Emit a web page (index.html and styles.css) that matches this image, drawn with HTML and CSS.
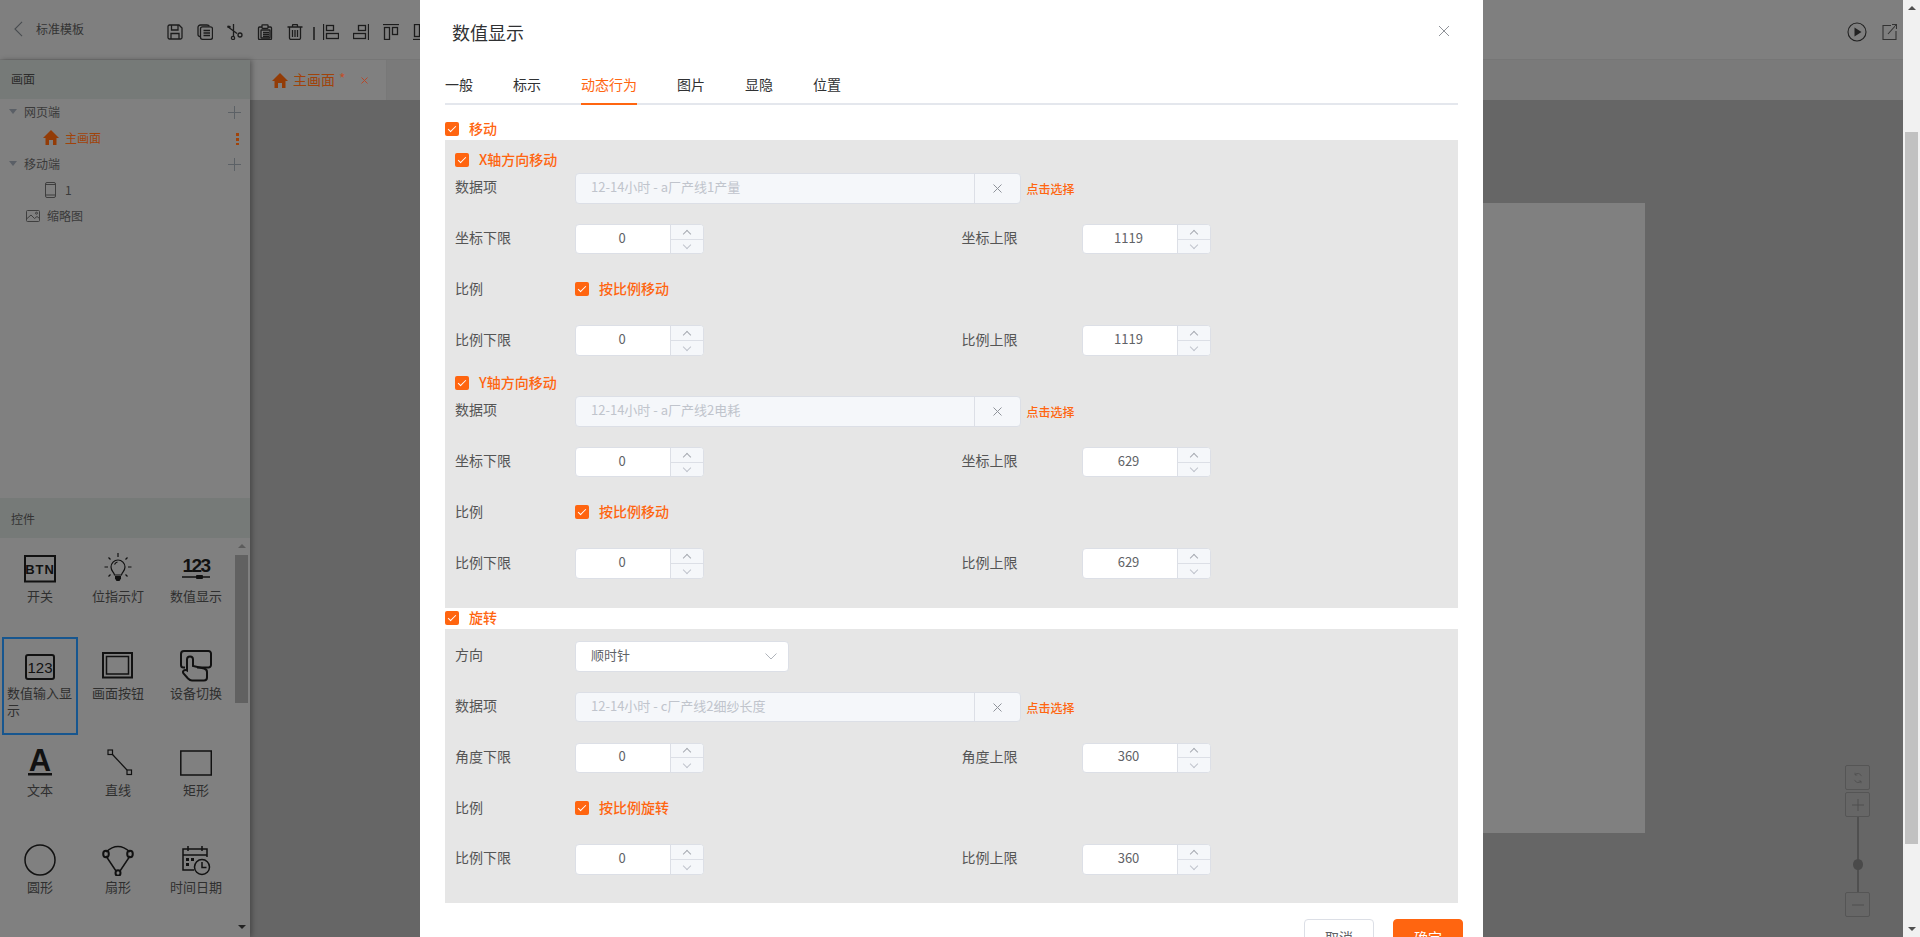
FILE: index.html
```html
<!DOCTYPE html>
<html lang="zh-CN">
<head>
<meta charset="utf-8">
<title>数值显示</title>
<link rel="stylesheet" href="styles.css">
</head>
<body>
<div class="app">
  <header class="topbar">
    <svg class="back" viewBox="0 0 10 18"><path d="M9 1 1 9l8 8"/></svg>
    <span class="app-title">标准模板</span>
    <div class="tools">
      <svg class="tool" viewBox="0 0 16 16"><path d="M1 2.500a1.500 1.500 0 0 1 1.500-1.500h9.500l3 3v9.500a1.500 1.500 0 0 1-1.500 1.500h-11a1.500 1.500 0 0 1-1.500-1.500zM4.500 1v5h6.500V1M4 15V9.500h8V15"/></svg>
      <svg class="tool" viewBox="0 0 16 16"><path d="M3 12.500c-1 0-2-.6-2-2V3.500c0-1.500 1-2.500 2.500-2.500H10c1.200 0 2 .5 2.300 1.300"/><rect x="3.500" y="2.800" width="12" height="12.500" rx="2"/><path d="M6.500 6.500h6.500M6.500 9h6.500M6.500 11.500h6.500"/></svg>
      <svg class="tool" viewBox="0 0 16 16"><path d="M.5 2.500 10 9.500M6.500 0v12"/><circle cx="6" cy="14" r="1.600"/><circle cx="13" cy="11" r="2"/><path d="M.5 2.500 3.500 3" stroke-width="2"/></svg>
      <svg class="tool" viewBox="0 0 16 16"><path d="M5 3H2.500a1 1 0 0 0-1 1v10.500a1 1 0 0 0 1 1h11a1 1 0 0 0 1-1V4a1 1 0 0 0-1-1H11"/><rect x="5" y=".8" width="6" height="3.500" rx=".5"/><rect x="4" y="6" width="9" height="8" rx=".5"/><path d="M6 8.500h6M6 10.500h6M6 12.500h6"/></svg>
      <svg class="tool" viewBox="0 0 16 16"><path d="M.5 3h15M5.500 3V1.500a1 1 0 0 1 1-1h3a1 1 0 0 1 1 1V3M2.500 3v11a1.500 1.500 0 0 0 1.500 1.500h8a1.500 1.500 0 0 0 1.500-1.500V3M5.500 6v7M8 6v7M10.500 6v7"/></svg>
      <span class="tool-sep"></span>
      <svg class="tool" viewBox="0 0 16 16"><path d="M.5 0v16"/><rect x="3.500" y="1.500" width="7" height="5"/><rect x="3.500" y="9.500" width="12" height="5"/></svg>
      <svg class="tool" viewBox="0 0 16 16"><path d="M15.500 0v16"/><rect x="5.500" y="1.500" width="7" height="5"/><rect x=".5" y="9.500" width="12" height="5"/></svg>
      <svg class="tool" viewBox="0 0 16 16"><path d="M0 .5h16"/><rect x="1.500" y="3.500" width="5" height="12"/><rect x="9.500" y="3.500" width="5" height="7"/></svg>
      <svg class="tool" viewBox="0 0 16 16"><path d="M0 15.500h16"/><rect x="1.500" y=".5" width="5" height="12"/><rect x="9.500" y="5.500" width="5" height="7"/></svg>
    </div>
    <div class="top-right">
      <svg class="run" viewBox="0 0 20 20"><circle cx="10" cy="10" r="9"/><path class="solid" d="M7.500 5.500v9l7-4.500z"/></svg>
      <svg class="open" viewBox="0 0 15 16"><path d="M9 1.500H1v14h13V7M6 10l8.500-9.500M10 .5h4.500V5"/></svg>
    </div>
  </header>

  <div class="main">
    <aside class="side">
      <div class="side-head">画面</div>
      <ul class="tree">
        <li class="tree-row group-row"><i class="caret"></i>网页端<svg class="plus" viewBox="0 0 13 13"><path d="M6.500 0v13M0 6.500h13"/></svg></li>
        <li class="tree-row page-row active"><svg class="home" viewBox="0 0 16 15"><path d="M8 0 0 8h2.500v7H6v-5h4v5h3.500V8H16z"/></svg>主画面<span class="dots"></span></li>
        <li class="tree-row group-row"><i class="caret"></i>移动端<svg class="plus" viewBox="0 0 13 13"><path d="M6.500 0v13M0 6.500h13"/></svg></li>
        <li class="tree-row page-row"><svg class="phone" viewBox="0 0 11 16"><rect x=".5" y=".5" width="10" height="15" rx="1.500"/><path d="M.5 2.500h10M.5 13h10"/></svg>1</li>
        <li class="tree-row thumb-row"><svg class="picture" viewBox="0 0 14 12"><rect x=".5" y=".5" width="13" height="11" rx="1"/><path d="M.5 9 5 5l3.500 3.500L11 6.500l2.500 2"/><circle cx="10.500" cy="3.200" r="1"/></svg>缩略图</li>
      </ul>
      <div class="side-head widgets-head">控件</div>
      <div class="widgets">
        <div class="widget-grid">
          <div class="widget"><svg class="w-icon" viewBox="0 0 32 32"><rect x="1" y="3" width="30" height="25.500"/><text class="btn-text" x="16" y="20.500">BTN</text></svg><span>开关</span></div>
          <div class="widget"><svg class="w-icon thin" viewBox="0 0 32 32"><path d="M12.500 22C12 19 9 18 9 14a7 7 0 1 1 14 0c0 4-3 5-3.500 8zM16 0v4M2.500 14h3.500M26 14h3.500M6.500 4.500l2 2M25.500 4.500l-2 2M6.500 23.500l2-2M25.500 23.500l-2-2M12.500 11.500a4.500 4.500 0 0 1 3-2.500"/><path class="solid" d="M13 23h6v2.500l-1.500 2.500h-3L13 25.500z"/></svg><span>位指示灯</span></div>
          <div class="widget"><svg class="w-icon" viewBox="0 0 32 32"><text class="num-bold" x="16" y="19">123</text><path d="M2 24h28" stroke-width="1.500"/><rect class="solid" x="16" y="22" width="7" height="4" rx="1"/></svg><span>数值显示</span></div>
          <div class="widget selected"><svg class="w-icon" viewBox="0 0 32 32"><rect x="2" y="5" width="28" height="24" rx="2"/><text class="num-reg" x="16" y="22.500">123</text></svg><span>数值输入显示</span></div>
          <div class="widget"><svg class="w-icon" viewBox="0 0 32 32"><rect x="1" y="3" width="29" height="24.500"/><rect x="4.500" y="6.500" width="22" height="17.500" stroke-width="1.500"/></svg><span>画面按钮</span></div>
          <div class="widget"><svg class="w-icon" viewBox="0 0 32 32"><path d="M5 17.500H3.500A2.500 2.500 0 0 1 1 15V4a3 3 0 0 1 3-3h24.500A2.500 2.500 0 0 1 31 3.500V15a2.500 2.500 0 0 1-2.500 2.500H17"/><path d="M7 19V9.500a3 3 0 0 1 6 0V16l11 2.500c2 .5 3 1.500 3 3.500v5.500a3 3 0 0 1-3 3H12c-1.500 0-3-1-4-2l-4.500-5c-1.500-2.500 1-4.500 3.500-3z"/></svg><span>设备切换</span></div>
          <div class="widget"><svg class="w-icon" viewBox="0 0 32 32"><text class="big-a" x="16" y="24">A</text><rect class="solid" x="4" y="26" width="24" height="2.500"/></svg><span>文本</span></div>
          <div class="widget"><svg class="w-icon thin" viewBox="0 0 32 32"><rect x="6" y="3" width="4.500" height="4.500"/><rect x="25" y="23" width="4.500" height="4.500"/><path d="M10.500 7.500 25 23"/></svg><span>直线</span></div>
          <div class="widget"><svg class="w-icon" viewBox="0 0 32 32"><rect x=".8" y="4" width="30.500" height="24" stroke-width="1.500"/></svg><span>矩形</span></div>
          <div class="widget"><svg class="w-icon" viewBox="0 0 32 32"><circle cx="16" cy="16" r="15" stroke-width="1.500"/></svg><span>圆形</span></div>
          <div class="widget"><svg class="w-icon" viewBox="0 0 32 32"><path d="M4 8Q16-3 28 8M4 12l10 15M28 12 18 27" stroke-width="1.500"/><ellipse cx="4" cy="10" rx="2.800" ry="3.200"/><ellipse cx="28" cy="10" rx="2.800" ry="3.200"/><ellipse cx="16" cy="29" rx="2.500" ry="2.800"/></svg><span>扇形</span></div>
          <div class="widget"><svg class="w-icon" viewBox="0 0 32 32"><path d="M14 26H3V5h24v8M3 11h24M8 2v5M22 2v5" stroke-width="1.500"/><circle cx="22" cy="23" r="7.500" stroke-width="1.500"/><path d="M22 18v5.500h4.500" stroke-width="1.500"/><path class="solid" d="M6 14h3v3H6zM11 14h3v3h-3zM6 19h3v3H6z"/></svg><span>时间日期</span></div>
        </div>
        <div class="mini-scroll"><i class="tri-up"></i><b class="mini-thumb"></b><i class="tri-down"></i></div>
      </div>
    </aside>

    <section class="work">
      <div class="tabbar">
        <div class="page-tab">
          <svg class="home" viewBox="0 0 16 15"><path d="M8 0 0 8h2.500v7H6v-5h4v5h3.500V8H16z"/></svg>
          <span>主画面</span><em>*</em>
          <svg class="tab-x" viewBox="0 0 7 7"><path d="m.5.5 6 6M6.500.5l-6 6"/></svg>
        </div>
      </div>
      <div class="canvas">
        <div class="sheet"></div>
        <div class="zoom-ctl">
          <div class="zoom-btn"><svg viewBox="0 0 12 16"><path d="M10.500 5.500A5 5 0 0 0 2 3.500M1.500 10.500A5 5 0 0 0 10 12.500M2 1v3h3M10 15v-3H7"/></svg></div>
          <div class="zoom-btn"><svg viewBox="0 0 12 12"><path d="M6 0v12M0 6h12"/></svg></div>
          <div class="zoom-track"><b></b></div>
          <div class="zoom-btn"><svg viewBox="0 0 12 12"><path d="M0 6h12"/></svg></div>
        </div>
      </div>
    </section>
  </div>

  <div class="dialog">
    <div class="dialog-head">
      <h2>数值显示</h2>
      <svg class="dialog-x" viewBox="0 0 12 12"><path d="m1 1 10 10M11 1 1 11"/></svg>
    </div>
    <nav class="tabs">
      <a>一般</a><a>标示</a><a class="on">动态行为</a><a>图片</a><a>显隐</a><a>位置</a>
    </nav>

    <label class="check sec-check"><i class="box"></i>移动</label>
    <div class="panel move-panel">
      <div class="group">
        <label class="check sub-check"><i class="box"></i>X轴方向移动</label>
        <div class="row"><span class="lab">数据项</span><div class="pick"><span>12-14小时 - a厂产线1产量</span><b><svg viewBox="0 0 9 9"><path d="m.5.5 8 8M8.500.5l-8 8"/></svg></b></div><a class="choose">点击选择</a></div>
        <div class="row"><div class="cell"><span class="lab">坐标下限</span><div class="num"><span>0</span><div class="spin"><i class="up"></i><i class="down"></i></div></div></div><div class="cell"><span class="lab">坐标上限</span><div class="num"><span>1119</span><div class="spin"><i class="up"></i><i class="down"></i></div></div></div></div>
        <div class="row"><span class="lab">比例</span><label class="check"><i class="box"></i>按比例移动</label></div>
        <div class="row"><div class="cell"><span class="lab">比例下限</span><div class="num"><span>0</span><div class="spin"><i class="up"></i><i class="down"></i></div></div></div><div class="cell"><span class="lab">比例上限</span><div class="num"><span>1119</span><div class="spin"><i class="up"></i><i class="down"></i></div></div></div></div>
      </div>
      <div class="group">
        <label class="check sub-check"><i class="box"></i>Y轴方向移动</label>
        <div class="row"><span class="lab">数据项</span><div class="pick"><span>12-14小时 - a厂产线2电耗</span><b><svg viewBox="0 0 9 9"><path d="m.5.5 8 8M8.500.5l-8 8"/></svg></b></div><a class="choose">点击选择</a></div>
        <div class="row"><div class="cell"><span class="lab">坐标下限</span><div class="num"><span>0</span><div class="spin"><i class="up"></i><i class="down"></i></div></div></div><div class="cell"><span class="lab">坐标上限</span><div class="num"><span>629</span><div class="spin"><i class="up"></i><i class="down"></i></div></div></div></div>
        <div class="row"><span class="lab">比例</span><label class="check"><i class="box"></i>按比例移动</label></div>
        <div class="row"><div class="cell"><span class="lab">比例下限</span><div class="num"><span>0</span><div class="spin"><i class="up"></i><i class="down"></i></div></div></div><div class="cell"><span class="lab">比例上限</span><div class="num"><span>629</span><div class="spin"><i class="up"></i><i class="down"></i></div></div></div></div>
      </div>
    </div>

    <label class="check sec-check second"><i class="box"></i>旋转</label>
    <div class="panel turn-panel">
      <div class="row"><span class="lab">方向</span><div class="select"><span>顺时针</span><svg viewBox="0 0 12 7"><path d="m.5.5 5.500 5.500L11.500.5"/></svg></div></div>
      <div class="row"><span class="lab">数据项</span><div class="pick"><span>12-14小时 - c厂产线2细纱长度</span><b><svg viewBox="0 0 9 9"><path d="m.5.5 8 8M8.500.5l-8 8"/></svg></b></div><a class="choose">点击选择</a></div>
      <div class="row"><div class="cell"><span class="lab">角度下限</span><div class="num"><span>0</span><div class="spin"><i class="up"></i><i class="down"></i></div></div></div><div class="cell"><span class="lab">角度上限</span><div class="num"><span>360</span><div class="spin"><i class="up"></i><i class="down"></i></div></div></div></div>
      <div class="row"><span class="lab">比例</span><label class="check"><i class="box"></i>按比例旋转</label></div>
      <div class="row"><div class="cell"><span class="lab">比例下限</span><div class="num"><span>0</span><div class="spin"><i class="up"></i><i class="down"></i></div></div></div><div class="cell"><span class="lab">比例上限</span><div class="num"><span>360</span><div class="spin"><i class="up"></i><i class="down"></i></div></div></div></div>
    </div>

    <div class="dialog-foot">
      <button class="btn">取消</button>
      <button class="btn primary">确定</button>
    </div>
  </div>

  <div class="page-scroll"><i class="tri-up"></i><b class="page-thumb"></b><i class="tri-down"></i></div>
</div>
</body>
</html>
```

FILE: styles.css
```css
* { box-sizing: border-box; }
html, body { margin: 0; height: 100%; overflow: hidden; }
body { font-family: "Noto Sans CJK SC", "Liberation Sans", sans-serif; font-size: 12px; color: #2b2b2b; }
ul { list-style: none; margin: 0; padding: 0; }
svg { display: block; flex: none; fill: none; }

.app { position: relative; width: 1920px; height: 937px; overflow: hidden; display: flex; flex-direction: column; background: #808080; }

/* top bar */
.topbar { height: 60px; flex: none; display: flex; align-items: center; padding-left: 14px; background: #7f7f7f; border-bottom: 1px solid #767676; }
.back { width: 9px; height: 16px; margin-top: -2px; stroke: #484c50; stroke-width: 1.2; }
.app-title { margin-left: 13px; margin-top: -2px; color: #333; width: 48px; white-space: nowrap; }
.tools { display: flex; align-items: center; gap: 14px; margin-left: 83px; margin-top: 4px; }
.tool { width: 16px; height: 16px; stroke: #1c1c1c; stroke-width: 1.3; }
.tool-sep { width: 1.500px; height: 13px; background: #333; margin: 3px -6px 0 -4px; }
.top-right { margin-left: auto; margin-right: 23px; display: flex; align-items: center; gap: 15px; margin-top: 4px; }
.run { width: 20px; height: 20px; stroke: #222; stroke-width: 1.1; }
.open { width: 15px; height: 16px; stroke: #333; stroke-width: 1.1; }
.solid { fill: #222; stroke: none; }

.main { flex: 1; display: flex; min-height: 0; }

/* sidebar */
.side { width: 250px; flex: none; display: flex; flex-direction: column; background: #808080; box-shadow: 2px 0 5px rgba(0,0,0,.3); position: relative; z-index: 1; }
.side-head { height: 38.500px; flex: none; display: flex; align-items: center; padding: 0 0 2px 11px; background: #767a78; color: #2b2b2b; }
.widgets-head { height: 40px; color: #333; padding-bottom: 0; }
.tree { flex: 1; }
.tree-row { height: 26px; display: flex; align-items: center; position: relative; color: #3a3a3a; }
.group-row { padding-left: 9px; }
.caret { width: 0; height: 0; border-left: 4px solid transparent; border-right: 4px solid transparent; border-top: 5px solid #5a5f66; margin-right: 7px; }
.plus { position: absolute; right: 9px; top: 7px; width: 13px; height: 13px; stroke: #5c6166; stroke-width: 1; }
.page-row { padding-left: 45px; }
.page-row .home { width: 16px; height: 15px; margin: 0 6px 0 -2px; }
.home path { fill: #933c07; }
.active { color: #a0430a; }
.dots { position: absolute; right: 11px; top: 7px; width: 3px; height: 13px; background: radial-gradient(circle, #a0430a 1.500px, transparent 1.600px) 0 0 / 3px 5px; }
.phone { width: 11px; height: 16px; margin-right: 9px; stroke: #3f3f3f; stroke-width: 1; }
.thumb-row { padding-left: 26px; }
.picture { width: 14px; height: 12px; margin-right: 7px; stroke: #3f3f3f; stroke-width: 1; }

.widgets { height: 399px; flex: none; display: flex; overflow: hidden; }
.widget-grid { width: 233px; flex: none; padding: 2px 0 0 2px; display: grid; grid-template-columns: repeat(3, 76px); grid-auto-rows: 97px; column-gap: 2px; align-content: start; }
.widget { height: 97px; border: 2px solid transparent; padding: 11px 3px 0; display: flex; flex-direction: column; align-items: center; font-size: 13px; line-height: 17px; color: #2f2f2f; }
.widget span { display: block; margin-top: 2px; text-align: left; }
.widget.selected { border-color: #17568f; height: 98px; }
.w-icon { width: 32px; height: 32px; stroke: #111; stroke-width: 2; }
.w-icon.thin { stroke-width: 1.200; }
.w-icon text { stroke: none; fill: #111; text-anchor: middle; font-family: "Liberation Sans", sans-serif; }
.w-icon .solid { fill: #111; }
.btn-text { font-weight: 700; font-size: 13px; letter-spacing: 1px; }
.num-bold { font-weight: 700; font-size: 19px; letter-spacing: -1.500px; }
.num-reg { font-size: 15px; }
.big-a { font-weight: 700; font-size: 31px; }
.mini-scroll { width: 17px; display: flex; flex-direction: column; align-items: center; }
.mini-scroll .tri-up { margin-top: 6px; border-bottom-color: #5c5c5c; }
.mini-scroll .tri-down { margin-top: auto; margin-bottom: 8px; border-top-color: #222; }
.mini-thumb { width: 13px; height: 148px; margin-top: 7px; background: #616161; }
.tri-up, .tri-down { width: 0; height: 0; border-left: 4px solid transparent; border-right: 4px solid transparent; }
.tri-up { border-bottom: 4px solid #505050; }
.tri-down { border-top: 4px solid #505050; }

/* work area */
.work { flex: 1; display: flex; flex-direction: column; min-width: 0; }
.tabbar { height: 40px; flex: none; background: #7a7a7a; }
.page-tab { width: 137px; height: 40px; padding-left: 22px; display: flex; align-items: center; background: #808080; border-right: 1px solid #787878; font-size: 14px; color: #a0430a; }
.page-tab .home { width: 16px; height: 15px; }
.page-tab span { margin: -2px 0 0 5px; }
.page-tab em { font-style: normal; font-size: 14px; margin: -4px 0 0 4px; color: #c0502a; }
.tab-x { width: 7px; height: 7px; margin-left: 15px; stroke: #b5482a; stroke-width: 1; }
.canvas { flex: 1; position: relative; background: #666; }
.sheet { position: absolute; left: 300px; top: 103px; width: 1095px; height: 630px; background: #808080; }
.zoom-ctl { position: absolute; left: 1595px; top: 665px; width: 25px; display: flex; flex-direction: column; gap: 2px; }
.zoom-btn { height: 25px; border: 1px solid #555; border-radius: 2px; display: flex; align-items: center; justify-content: center; }
.zoom-btn svg { width: 12px; height: 12px; stroke: #4e4e4e; stroke-width: 1; }
.zoom-track { height: 75px; margin: -2px auto; width: 2px; background: #505050; position: relative; }
.zoom-track b { position: absolute; left: -4px; top: 42px; width: 10px; height: 11px; border-radius: 50%; background: #4a4a4a; }

/* dialog */
.dialog { position: absolute; left: 420px; top: 0; width: 1063px; height: 1000px; padding: 0 25px; background: #fff; z-index: 5; font-size: 14px; color: #606266; }
.dialog-head { height: 66px; display: flex; align-items: center; justify-content: space-between; padding: 0 13px 2px 7px; margin-right: -5px; }
.dialog-head h2 { margin: 0; font-size: 18px; font-weight: 400; color: #303133; }
.dialog-x { width: 12px; height: 12px; margin-top: -2px; stroke: #909399; stroke-width: 1; }
.tabs { height: 39px; display: flex; gap: 40px; border-bottom: 2px solid #e4e7ed; }
.tabs a { height: 39px; line-height: 37px; color: #303133; }
.tabs .on { color: #ff6510; border-bottom: 2px solid #ff6510; }

.check { display: flex; align-items: center; height: 20px; padding-bottom: 2px; color: #ff6510; font-weight: 500; white-space: nowrap; }
.box { position: relative; width: 14px; height: 14px; margin: 2px 10px 0 0; border-radius: 2px; background: #ff6510; flex: none; }
.box::after { content: ""; position: absolute; left: 4.500px; top: 2px; width: 3px; height: 7px; border: solid #fff; border-width: 0 1px 1px 0; transform: rotate(45deg); }
.sec-check { margin: 14px 0 1px; }
.sec-check.second { height: 21px; margin: 0; padding-bottom: 3px; }

.panel { background: #e6e6e6; padding-left: 10px; }
.move-panel { padding-top: 10px; padding-bottom: 29.250px; }
.turn-panel { padding-top: 12px; padding-bottom: 28.500px; }
.group + .group { margin-top: 17.250px; }
.sub-check { margin-bottom: 3px; }
.row { height: 30.500px; display: flex; align-items: center; margin-bottom: 20.250px; }
.row:last-child { margin-bottom: 0; }
.row .check { padding-bottom: 3px; }
.lab { width: 120px; flex: none; padding-bottom: 4px; color: #555; }
.cell { width: 506.500px; flex: none; display: flex; align-items: center; }
.pick { width: 445.500px; height: 30.500px; display: flex; align-items: center; background: #f5f7fa; border: 1px solid #dcdfe6; border-radius: 4px; padding-left: 15px; font-size: 13px; color: #c0c4cc; }
.pick span { flex: 1; padding-bottom: 4px; }
.pick b { width: 46px; height: 100%; flex: none; display: flex; align-items: center; justify-content: center; border-left: 1px solid #dcdfe6; }
.pick svg { width: 9px; height: 9px; stroke: #8f939a; stroke-width: 1; }
.choose { margin-left: 6px; font-size: 12px; font-weight: 500; color: #ff6510; }
.num { width: 129px; height: 30.500px; display: flex; background: #fff; border: 1px solid #dcdfe6; border-radius: 4px; font-size: 13px; color: #606266; overflow: hidden; }
.num span { flex: 1; display: flex; align-items: center; justify-content: center; padding: 0 2px 4px 0; }
.spin { width: 33px; flex: none; display: flex; flex-direction: column; background: #f5f7fa; border-left: 1px solid #dcdfe6; }
.spin i { flex: 1; position: relative; }
.spin .down { border-top: 1px solid #dcdfe6; }
.spin i::after { content: ""; position: absolute; left: 50%; top: 50%; width: 5px; height: 5px; margin-left: -3px; border: solid #a8abb2; border-width: 1px 0 0 1px; transform: translateY(-1px) rotate(45deg); }
.spin .down::after { border-color: #c0c4cc; border-width: 0 1px 1px 0; transform: translateY(-4px) rotate(45deg); }
.select { width: 214px; height: 30.500px; display: flex; align-items: center; justify-content: space-between; padding: 0 11px 0 15px; background: #fff; border: 1px solid #dcdfe6; border-radius: 4px; font-size: 13px; color: #606266; }
.select span { padding-bottom: 4px; }
.select svg { width: 12px; height: 7px; stroke: #b0b4bb; stroke-width: 1; }

.dialog-foot { margin: 16px -5px 0 0; display: flex; justify-content: flex-end; gap: 19px; }
.btn { width: 70px; height: 38px; font: 14px "Noto Sans CJK SC", sans-serif; color: #606266; background: #fff; border: 1px solid #dcdfe6; border-radius: 4px; padding: 0 0 2px; }
.btn.primary { color: #fff; background: #ff6510; border-color: #ff6510; }

/* page scrollbar */
.page-scroll { position: absolute; right: 0; top: 0; width: 17px; height: 937px; z-index: 6; background: #f1f1f1; display: flex; flex-direction: column; align-items: center; }
.page-scroll .tri-up { position: absolute; top: 6px; left: 4.500px; }
.page-scroll .tri-down { position: absolute; bottom: 6px; left: 4.500px; }
.page-thumb { position: absolute; left: 2px; top: 132px; width: 13px; height: 712px; background: #c1c1c1; }
```
